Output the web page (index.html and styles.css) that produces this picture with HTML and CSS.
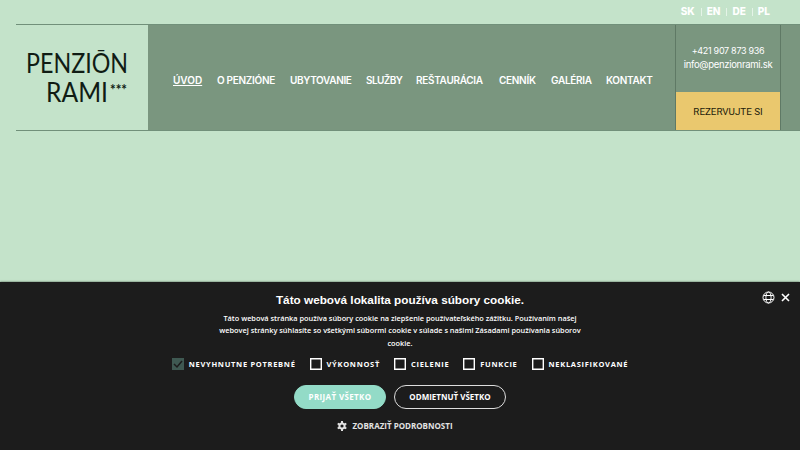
FILE: index.html
```
<!DOCTYPE html>
<html lang="sk">
<head>
<meta charset="utf-8">
<meta name="viewport" content="width=device-width, initial-scale=1">
<title>Penzión Rami</title>
<link rel="stylesheet" href="styles.css">
</head>
<body>

<div class="languages">
  <a>SK</a><i></i><a>EN</a><i></i><a>DE</a><i></i><a>PL</a>
</div>

<header class="header">
  <a class="logo">
    <svg width="131" height="104" viewBox="0 0 131 104">
      <text x="10" y="48" textLength="102" lengthAdjust="spacingAndGlyphs">PENZIŌN</text>
      <text x="30" y="77" textLength="62" lengthAdjust="spacingAndGlyphs">RAMI</text>
      <text class="stars" x="94" y="70" textLength="17" lengthAdjust="spacingAndGlyphs">***</text>
    </svg>
  </a>
  <nav class="menu">
    <a class="active">ÚVOD</a>
    <a class="m2">O PENZIÓNE</a>
    <a class="m3">UBYTOVANIE</a>
    <a class="m4">SLUŽBY</a>
    <a class="m5">REŠTAURÁCIA</a>
    <a class="m6">CENNÍK</a>
    <a class="m7">GALÉRIA</a>
    <a class="m8">KONTAKT</a>
  </nav>
  <div class="contact">
    <div class="info">
      <span class="phone">+421 907 873 936</span>
      <span>info@penzionrami.sk</span>
    </div>
    <a class="book">REZERVUJTE SI</a>
  </div>
</header>

<section class="cookies">
  <div class="tools">
    <svg width="13" height="13" viewBox="0 0 13 13">
      <circle cx="6.5" cy="6.5" r="5.5"/>
      <ellipse cx="6.5" cy="6.5" rx="2.6" ry="5.5"/>
      <path d="M1.6 4.5h9.8M1.6 8.5h9.8"/>
    </svg>
    <svg class="close" width="9" height="9" viewBox="0 0 9 9"><path d="M1 1l7 7M8 1L1 8"/></svg>
  </div>
  <h2>Táto webová lokalita používa súbory cookie.</h2>
  <p>
    <span>Táto webová stránka používa súbory cookie na zlepšenie používateľského zážitku. Používaním našej</span>
    <span>webovej stránky súhlasíte so všetkými súbormi cookie v súlade s našimi Zásadami používania súborov</span>
    <span>cookie.</span>
  </p>
  <div class="options">
    <label class="required"><b class="box"><svg width="12" height="12" viewBox="0 0 12 12"><path d="M2 6l3 3 5-6"/></svg></b><span>NEVYHNUTNE POTREBNÉ</span></label>
    <label><b class="box"></b><span>VÝKONNOSŤ</span></label>
    <label><b class="box"></b><span>CIELENIE</span></label>
    <label><b class="box"></b><span>FUNKCIE</span></label>
    <label><b class="box"></b><span>NEKLASIFIKOVANÉ</span></label>
  </div>
  <div class="buttons">
    <button class="accept">PRIJAŤ VŠETKO</button>
    <button class="decline">ODMIETNUŤ VŠETKO</button>
  </div>
  <div class="details">
    <svg width="10" height="10" viewBox="0 0 10 10">
      <circle cx="5" cy="5" r="2.6"/>
      <path d="M5 0v2M5 8v2M.7 2.5l1.7 1M7.6 6.5l1.7 1M.7 7.5l1.7-1M7.6 3.5l1.7-1"/>
    </svg>
    <span>ZOBRAZIŤ PODROBNOSTI</span>
  </div>
</section>

</body>
</html>
```

FILE: styles.css
```
* {
  box-sizing: border-box;
}
body {
  margin: 0;
  height: 450px;
  overflow: hidden;
  display: flex;
  flex-direction: column;
  background: #c4e3ca;
  font-family: Inter, "Liberation Sans", sans-serif;
}
.languages {
  height: 24px;
  padding: 0 30px 2px 0;
  display: flex;
  justify-content: flex-end;
  align-items: center;
  color: #fff;
  font-size: 10px;
  font-weight: 800;
}
.languages i {
  width: 1px;
  height: 8px;
  margin: 2px 5px 0 6px;
  background: #e4f3e7;
}
.header {
  height: 107px;
  margin-left: 16px;
  display: flex;
  border-top: 1px solid #71907a;
  border-bottom: 1px solid #71907a;
  background: #7a967f;
}
.logo {
  width: 132px;
  background: #c4e3ca;
}
.logo text {
  font-family: Lato, sans-serif;
  font-size: 26px;
  font-weight: 400;
  fill: #101c14;
}
.logo .stars {
  font-size: 16px;
  font-weight: 700;
}
.menu {
  width: 527px;
  padding: 4px 0 0 25px;
  display: flex;
  align-items: center;
  gap: 15px;
  color: #fff;
  font-size: 10px;
  font-weight: 600;
  letter-spacing: -.3px;
  white-space: nowrap;
}
.active {
  width: 29px;
  text-decoration: underline;
  letter-spacing: 0;
}
.m2 {
  width: 58px;
}
.m3 {
  width: 61px;
  letter-spacing: -.35px;
}
.m4 {
  width: 35px;
  letter-spacing: -.6px;
}
.m5 {
  width: 68px;
}
.m6 {
  width: 37px;
}
.m7 {
  width: 40px;
}
.m8 {
  width: 46px;
}
.contact {
  width: 106px;
  display: flex;
  flex-direction: column;
  border-left: 1px solid #5f7965;
  border-right: 1px solid #5f7965;
}
.info {
  height: 67px;
  padding-top: 19px;
  color: #fff;
  font-size: 9.5px;
  line-height: 14px;
  letter-spacing: -.3px;
  text-align: center;
}
.info span {
  display: block;
}
.info .phone {
  font-size: 9px;
}
.book {
  flex: 1;
  display: flex;
  align-items: center;
  justify-content: center;
  background: #eac86e;
  color: #241c0c;
  font-family: Roboto, sans-serif;
  font-size: 9.8px;
}
.cookies {
  position: relative;
  height: 168px;
  margin-top: auto;
  padding-top: 11px;
  background: #1c1c1c;
  box-shadow: 0 0 2px #44584a;
  color: #fff;
  text-align: center;
  font-family: "Liberation Sans", sans-serif;
}
.tools {
  position: absolute;
  top: 9px;
  right: 10px;
  display: flex;
  align-items: center;
  gap: 6px;
}
.tools svg {
  fill: none;
  stroke: #fff;
}
.tools .close {
  stroke-width: 1.6;
}
.cookies h2 {
  margin: 0;
  font-size: 11.75px;
  line-height: 14px;
}
.cookies p {
  margin: 5px 0 0;
  font-family: "Open Sans", sans-serif;
  font-size: 7.35px;
  font-weight: 600;
  line-height: 12.3px;
}
.cookies p span {
  display: block;
}
.options {
  margin-top: 9px;
  display: flex;
  justify-content: center;
  gap: 14px;
  font-family: "Open Sans", sans-serif;
  font-size: 7.5px;
  font-weight: 700;
  letter-spacing: .7px;
}
.options label {
  display: flex;
  align-items: center;
  gap: 5px;
  height: 12px;
}
.box {
  width: 12px;
  height: 12px;
  box-shadow: inset 0 0 0 1.4px #fff;
}
.required .box {
  box-shadow: none;
  background: #3f5952;
}
.required svg {
  display: block;
  fill: none;
  stroke: #1c1c1c;
  stroke-width: 1.5;
}
.buttons {
  margin-top: 15px;
  display: flex;
  justify-content: center;
  gap: 8px;
}
.buttons button {
  height: 24px;
  padding: 0;
  border: 1px solid #ddd;
  border-radius: 13px;
  background: transparent;
  color: #fff;
  font-family: "Open Sans", sans-serif;
  font-size: 8px;
  font-weight: 700;
}
.buttons .accept {
  width: 92px;
  border-color: #93dbc7;
  background: #93dbc7;
  letter-spacing: .35px;
}
.buttons .decline {
  width: 112px;
}
.details {
  height: 12px;
  margin: 11px 0 0 -10px;
  display: flex;
  align-items: center;
  justify-content: center;
  gap: 5px;
  color: #e2e2e2;
  font-family: "Open Sans", sans-serif;
  font-size: 8px;
  font-weight: 700;
}
.details svg {
  fill: none;
  stroke: #e2e2e2;
  stroke-width: 2;
}
```
